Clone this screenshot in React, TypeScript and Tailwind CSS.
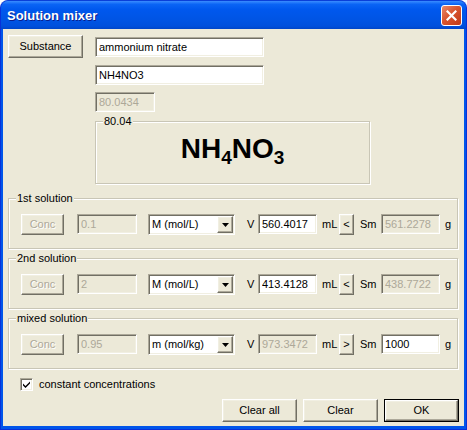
import React from 'react';

// Win XP (Luna) dialog pieces
const raised =
  'bg-[#ece9d8] border border-t-white border-l-white border-r-[#716f64] border-b-[#716f64] shadow-[inset_-1px_-1px_0_#aca899,inset_1px_1px_0_#f1efe2]';
const sunken =
  'border border-t-[#aca899] border-l-[#aca899] border-r-white border-b-white shadow-[inset_1px_1px_0_#716f64,inset_-1px_-1px_0_#f1efe2]';

interface EditProps {
  value: string;
  width: string;
  disabled?: boolean;
  className?: string;
}

const Edit = ({ value, width, disabled, className = '' }: EditProps) => (
  <input
    readOnly
    value={value}
    className={`${sunken} ${width} h-[20px] pl-[3px] outline-none text-[11px] leading-[18px] ${
      disabled ? 'bg-[#ece9d8] text-[#aca899]' : 'bg-white text-black'
    } ${className}`}
  />
);

interface BtnProps {
  label: string;
  width: string;
  height?: string;
  disabled?: boolean;
  isDefault?: boolean;
}

const Btn = ({ label, width, height = 'h-[23px]', disabled, isDefault }: BtnProps) => {
  const inner = (
    <button
      className={`${raised} ${isDefault ? 'w-full h-full' : `${width} ${height}`} flex items-center justify-center text-[11px] ${
        disabled ? 'text-[#aca899] [text-shadow:1px_1px_0_#ffffff]' : 'text-black'
      }`}
    >
      {label}
    </button>
  );
  if (isDefault) {
    return <div className={`${width} ${height} border border-black`}>{inner}</div>;
  }
  return inner;
};

const Combo = ({ value }: { value: string }) => (
  <div className={`${sunken} w-[87px] h-[21px] p-[1px] bg-white flex`}>
    <span className="flex-1 pl-[2px] leading-[17px] text-[11px]">{value}</span>
    <div className={`${raised} w-[16px] h-[17px] flex items-center justify-center`}>
      <svg width="7" height="4" viewBox="0 0 7 4">
        <path d="M0 0h7L3.5 4z" fill="#000" />
      </svg>
    </div>
  </div>
);

const Group = ({
  title,
  className = '',
  children,
}: {
  title: string;
  className?: string;
  children?: React.ReactNode;
}) => (
  <div className={`relative border border-[#c9c6b6] shadow-[inset_1px_1px_0_#ffffff,1px_1px_0_#ffffff] ${className}`}>
    <span className="absolute -top-[7px] left-[7px] bg-[#ece9d8] px-[1px] text-[11px] leading-[13px]">
      {title}
    </span>
    {children}
  </div>
);

interface SolutionRow {
  title: string;
  conc: string;
  unit: string;
  volume: string;
  volumeDisabled: boolean;
  arrow: string;
  mass: string;
  massDisabled: boolean;
}

const rows: SolutionRow[] = [
  { title: '1st solution', conc: '0.1', unit: 'M (mol/L)', volume: '560.4017', volumeDisabled: false, arrow: '<', mass: '561.2278', massDisabled: true },
  { title: '2nd solution', conc: '2', unit: 'M (mol/L)', volume: '413.4128', volumeDisabled: false, arrow: '<', mass: '438.7722', massDisabled: true },
  { title: 'mixed solution', conc: '0.95', unit: 'm (mol/kg)', volume: '973.3472', volumeDisabled: true, arrow: '>', mass: '1000', massDisabled: false },
];

const App = () => {
  return (
    <div className="w-[467px] h-[430px] bg-white font-['Liberation_Sans',Arial,sans-serif] text-black">
      <div className="w-full h-full flex flex-col rounded-t-[8px] bg-[#0055ea] border border-[#0831d9] border-t-[#0a3fd8]">
        {/* title bar */}
        <div className="h-[28px] flex items-start rounded-t-[7px] bg-[linear-gradient(to_bottom,#3a8cff_0%,#0a64f5_12%,#0058ee_30%,#0054e3_70%,#0050dc_90%,#0046c8_100%)]">
          <span className="ml-[6px] mt-[7px] text-[13px] leading-[15px] font-bold text-white [text-shadow:1px_1px_0_#0a1e8c]">
            Solution mixer
          </span>
          <div className="ml-auto mr-[4px] mt-[4px] w-[21px] h-[21px] rounded-[3px] border border-white bg-[linear-gradient(135deg,#e9896a_0%,#d8552f_45%,#c13a18_100%)] flex items-center justify-center">
            <svg width="11" height="11" viewBox="0 0 11 11">
              <path d="M1.5 1.5l8 8M9.5 1.5l-8 8" stroke="#fff" strokeWidth="2.2" strokeLinecap="square" />
            </svg>
          </div>
        </div>

        {/* client area */}
        <div className="flex-1 mx-[2px] mb-[3px] bg-[#ece9d8] flex flex-col pt-[6px] text-[11px]">
          <div className="flex items-start">
            <div className="ml-[5px]">
              <Btn label="Substance" width="w-[75px]" />
            </div>
            <Edit value="ammonium nitrate" width="w-[169px]" className="ml-[12px] mt-[2px]" />
          </div>
          <Edit value="NH4NO3" width="w-[169px]" className="ml-[92px] mt-[7px]" />
          <Edit value="80.0434" width="w-[60px]" disabled className="ml-[92px] mt-[7px]" />

          <Group title="80.04" className="ml-[92px] mt-[9px] w-[275px] h-[63px]">
            <div className="h-full flex items-center justify-center pb-[4px]">
              <span className="text-[28px] leading-[32px] font-bold">
                NH<span className="text-[19px] relative top-[6px]">4</span>NO
                <span className="text-[19px] relative top-[6px]">3</span>
              </span>
            </div>
          </Group>

          {rows.map((r, i) => (
            <Group key={r.title} title={r.title} className={`ml-[5px] w-[450px] h-[51px] ${i === 0 ? 'mt-[14px]' : 'mt-[9px]'}`}>
              <div className="flex items-start pt-[15px] pl-[12px]">
                <Btn label="Conc" width="w-[43px]" height="h-[21px]" disabled />
                <Edit value={r.conc} width="w-[60px]" disabled className="ml-[13px]" />
                <div className="ml-[11px]">
                  <Combo value={r.unit} />
                </div>
                <span className="w-[23px] pl-[12px] leading-[20px]">V</span>
                <Edit value={r.volume} width="w-[59px]" disabled={r.volumeDisabled} />
                <span className="w-[22px] pl-[5px] leading-[20px]">mL</span>
                <Btn label={r.arrow} width="w-[15px]" height="h-[21px]" />
                <span className="w-[27px] pl-[6px] leading-[20px]">Sm</span>
                <Edit value={r.mass} width="w-[59px]" disabled={r.massDisabled} />
                <span className="pl-[5px] leading-[20px]">g</span>
              </div>
            </Group>
          ))}

          <div className="flex items-center ml-[17px] mt-[9px]">
            <div className={`${sunken} w-[13px] h-[13px] bg-white flex items-center justify-center`}>
              <svg width="7" height="7" viewBox="0 0 7 7">
                <path d="M0 2.5l2.5 2.5L7 0.5v2L2.5 7 0 4.5z" fill="#000" />
              </svg>
            </div>
            <span className="ml-[6px] leading-[13px]">constant concentrations</span>
          </div>

          <div className="flex justify-end gap-[6px] pr-[5px] mt-[8px]">
            <Btn label="Clear all" width="w-[75px]" />
            <Btn label="Clear" width="w-[75px]" />
            <Btn label="OK" width="w-[75px]" isDefault />
          </div>
        </div>
      </div>
    </div>
  );
};

export default App;
